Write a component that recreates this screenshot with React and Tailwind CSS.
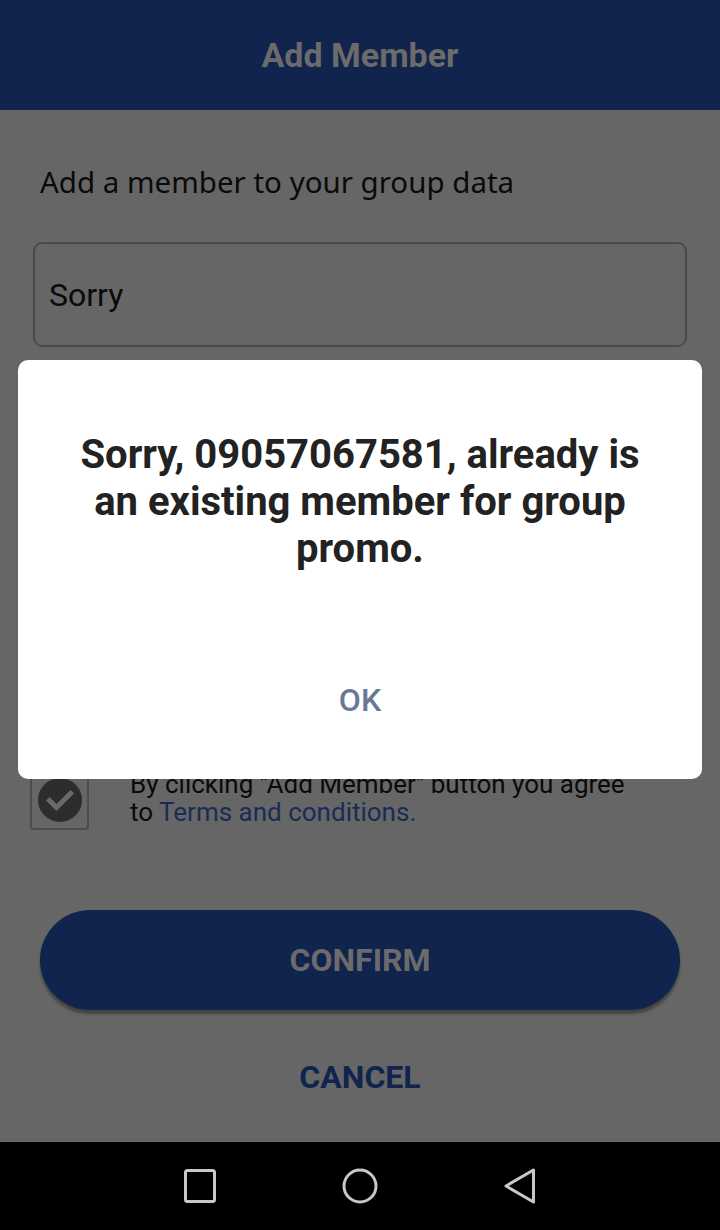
export default function App() {
  return (
    <div className="relative w-[720px] h-[1230px] flex flex-col overflow-hidden" style={{ fontFamily: "Roboto, 'Liberation Sans', sans-serif" }}>
      <header className="h-[110px] shrink-0 bg-[#10244d] flex items-center justify-center">
        <span className="text-[34px] font-bold text-[#6b6b6b] leading-none">Add Member</span>
      </header>

      <main className="flex-1 bg-[#666666] flex flex-col">
        <p className="mt-[53px] ml-[40px] text-[29.5px] leading-[38px] text-[#0a0a0a]" style={{ fontFamily: "'Noto Sans', 'Open Sans', sans-serif" }}>
          Add a member to your group data
        </p>
        <div className="mt-[41px] mx-[33px] h-[105px] rounded-[9px] border-2 border-[#4a4a4a] flex items-center px-[14px]">
          <span className="text-[32px] text-[#0a0a0a]">Sorry</span>
        </div>

        <div className="mt-[423px] ml-[30px] flex items-start gap-[41px]">
          <div className="w-[59px] h-[60px] rounded-[4px] border-2 border-[#4c4c4c] flex items-center justify-center shrink-0">
            <svg width="46" height="46" viewBox="0 0 46 46">
              <circle cx="23" cy="23" r="22" fill="#2b2e2c" />
              <path d="M12.5 23.5 L19.5 30.5 L33.5 16.5" fill="none" stroke="#6a6a6a" strokeWidth="5" strokeLinecap="square" />
            </svg>
          </div>
          <p className="text-[26px] leading-[28px] text-[#0a0a0a]">
            By clicking "Add Member" button you agree
            <br />
            to <span className="text-[#192c56]">Terms and conditions.</span>
          </p>
        </div>

        <div className="mt-[80px] mx-[40px] h-[100px] shrink-0 rounded-full bg-[#10244d] flex items-center justify-center shadow-[0_4px_3px_rgba(0,0,0,0.35)]">
          <span className="text-[32px] font-bold text-[#6b6b6b]">CONFIRM</span>
        </div>

        <div className="mt-[48px] flex justify-center">
          <span className="text-[32px] font-bold text-[#10244d] leading-[38px]">CANCEL</span>
        </div>
      </main>

      <nav className="h-[88px] shrink-0 bg-black flex items-center justify-center gap-[124px]">
        <div className="w-[36px] flex justify-center">
          <svg width="32" height="34" viewBox="0 0 32 34">
            <rect x="1.5" y="1.5" width="29" height="31" rx="2" fill="none" stroke="#c5c8cc" strokeWidth="3" />
          </svg>
        </div>
        <div className="w-[36px] flex justify-center">
          <svg width="36" height="36" viewBox="0 0 36 36">
            <ellipse cx="18" cy="18" rx="16" ry="16" fill="none" stroke="#c5c8cc" strokeWidth="3" />
          </svg>
        </div>
        <div className="w-[36px] flex justify-center">
          <svg width="34" height="36" viewBox="0 0 34 36">
            <path d="M30.5 2 L30.5 34 L3 18 Z" fill="none" stroke="#c5c8cc" strokeWidth="3" strokeLinejoin="round" />
          </svg>
        </div>
      </nav>

      <div className="absolute left-[18px] top-[360px] w-[684px] h-[419px] bg-white rounded-[10px] flex flex-col items-center">
        <p className="mt-[71px] px-[50px] text-center text-[40px] leading-[47px] font-bold text-[#222222]">
          Sorry, 09057067581, already is an existing member for group promo.
        </p>
        <span className="absolute top-[321px] text-[32px] leading-[38px] font-medium text-[#6b7894]">OK</span>
      </div>
    </div>
  );
}
